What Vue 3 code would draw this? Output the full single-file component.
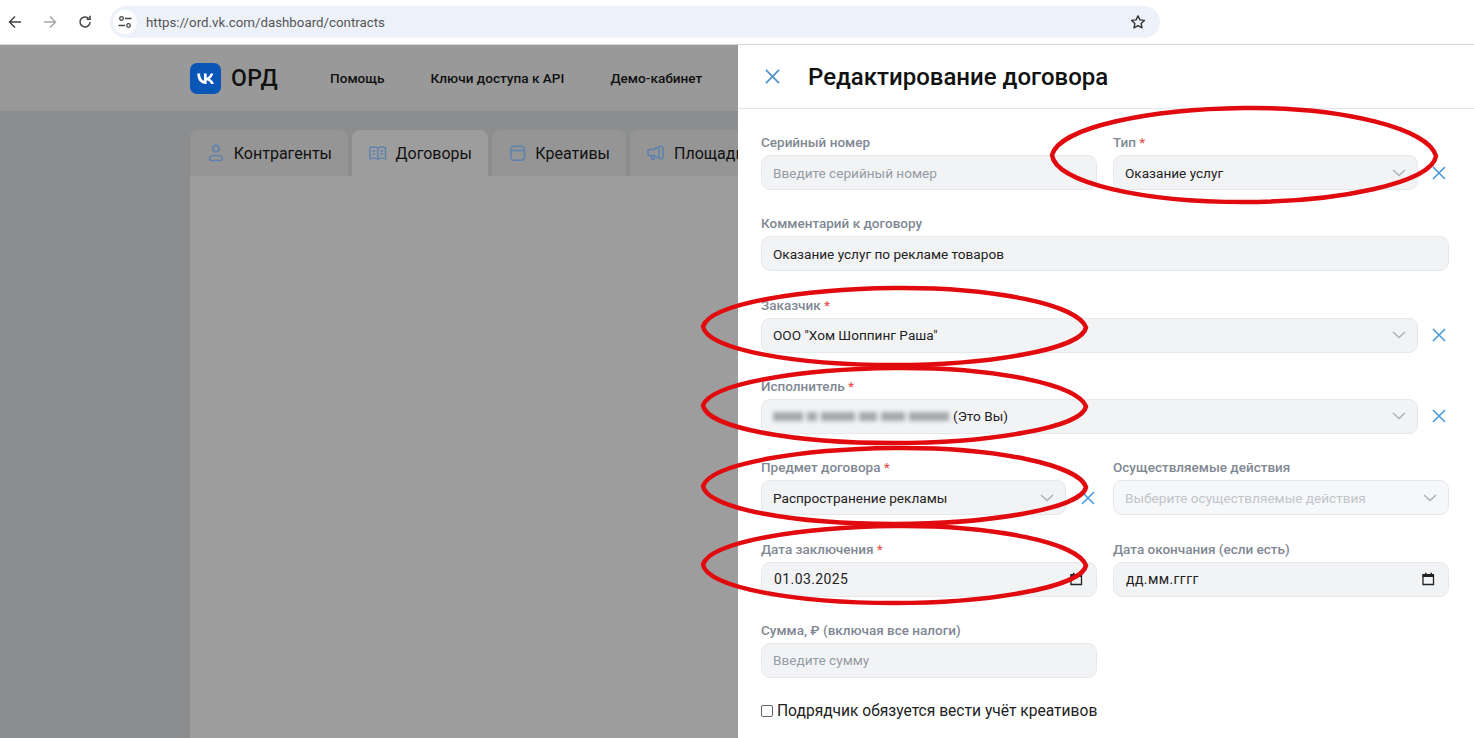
<template>
  <div class="screen">
    <!-- browser toolbar -->
    <div class="toolbar">
      <svg class="tool-btn" viewBox="0 0 16 16"><path d="M14 8H2.500M8 2.500 2.500 8 8 13.500" fill="none" stroke="#444" stroke-width="1.500"/></svg>
      <svg class="tool-btn" viewBox="0 0 16 16"><path d="M2 8h11.500M8 2.500 13.500 8 8 13.500" fill="none" stroke="#a8a8a8" stroke-width="1.500"/></svg>
      <svg class="tool-btn" viewBox="0 0 16 16"><path d="M13 8a5 5 0 1 1-1.500-3.600M13 1.800v3.400H9.600" fill="none" stroke="#444" stroke-width="1.500"/></svg>
      <div class="address">
        <span class="site-chip">
          <svg width="14" height="14" viewBox="0 0 14 14"><g fill="none" stroke="#444" stroke-width="1.300"><circle cx="3.500" cy="3.500" r="1.800"/><circle cx="10.500" cy="10.500" r="1.800"/><path d="M7 3.500h6.500M.5 10.500H7"/></g></svg>
        </span>
        <span class="url">https://ord.vk.com/dashboard/contracts</span>
        <svg class="star" viewBox="0 0 16 16"><path d="m8 1.800 1.900 4.100 4.500.5-3.300 3 .9 4.400L8 11.600l-4 2.200.9-4.400-3.300-3 4.500-.5z" fill="none" stroke="#333" stroke-width="1.400" stroke-linejoin="round"/></svg>
      </div>
    </div>

    <div class="page">
      <!-- dimmed site under the drawer -->
      <header class="site-header">
        <div class="logo">
          <svg width="25" height="25" viewBox="0 0 48 48"><path fill="#fff" d="M25.54 34.500c-10.940 0-17.180-7.500-17.440-19.980h5.480c.18 9.160 4.220 13.040 7.420 13.840V14.520h5.160v7.900c3.160-.34 6.480-3.940 7.600-7.900h5.160c-.86 4.880-4.460 8.480-7.020 9.960 2.560 1.200 6.660 4.340 8.220 10.020h-5.680c-1.220-3.800-4.260-6.740-8.280-7.140v7.140h-.62Z"/></svg>
        </div>
        <span class="brand">ОРД</span>
        <nav class="nav">
          <span v-for="item in nav" :key="item">{{ item }}</span>
        </nav>
      </header>
      <main class="site-main">
        <div class="tabs">
          <div class="tab tab-people">
            <svg viewBox="0 0 20 20"><g fill="none" stroke="#5f82ad" stroke-width="1.600"><circle cx="10" cy="5.500" r="3.200"/><path d="M3.500 15.500c0-2.200 2-3.300 6.500-3.300s6.500 1.100 6.500 3.300c0 1.500-1 2-2 2h-9c-1 0-2-.5-2-2z"/></g></svg>
            Контрагенты
          </div>
          <div class="tab tab-active">
            <svg viewBox="0 0 20 20"><g fill="none" stroke="#5f82ad" stroke-width="1.500"><path d="M2 4.500c3-1 6-1 8 .5 2-1.500 5-1.500 8-.5v11.500c-3-1-6-1-8 .5-2-1.500-5-1.500-8-.5zM10 5v11.500"/><path d="M4.500 8h3M4.500 11h3M12.500 8h3M12.500 11h3"/></g></svg>
            Договоры
          </div>
          <div class="tab tab-creative">
            <svg viewBox="0 0 20 20"><g fill="none" stroke="#5f82ad" stroke-width="1.600"><rect x="3" y="3" width="14" height="14.500" rx="3.500"/><path d="M3 7.500h14"/></g></svg>
            Креативы
          </div>
          <div class="tab tab-place">
            <svg viewBox="0 0 20 20"><g fill="none" stroke="#5f82ad" stroke-width="1.600" stroke-linejoin="round"><path d="M2 8c0-1 .6-1.500 1.500-1.500H8L14 3.500c1.500-.6 3-.3 3 2v8c0 2.300-1.500 2.600-3 2L8 12.500H3.500C2.600 12.500 2 12 2 11z"/><path d="M5 12.500l1 4h2.500l-.5-4M13 4v11"/></g></svg>
            Площадки
          </div>
        </div>
        <div class="tab-body"></div>
      </main>

      <!-- drawer -->
      <aside class="drawer">
        <div class="drawer-head">
          <svg class="close" viewBox="0 0 16 16"><path d="m1 1 14 14M15 1 1 15" stroke="#4a90d0" stroke-width="1.700" fill="none"/></svg>
          <h1>Редактирование договора</h1>
        </div>
        <div class="form">
          <div class="field">
            <label>Серийный номер</label>
            <div class="control muted">Введите серийный номер</div>
          </div>
          <div class="field">
            <label>Тип <i>*</i></label>
            <div class="with-clear">
              <div class="control select">Оказание услуг<svg class="chev" viewBox="0 0 14 8"><path d="m1 1 6 5.500L13 1" fill="none" stroke="#aab2bd" stroke-width="1.500"/></svg></div>
              <svg class="clear" viewBox="0 0 14 14"><path d="m1 1 12 12M13 1 1 13" stroke="#4a9bdc" stroke-width="1.600" fill="none"/></svg>
            </div>
          </div>

          <div class="field wide">
            <label>Комментарий к договору</label>
            <div class="control">Оказание услуг по рекламе товаров</div>
          </div>

          <div class="field wide">
            <label>Заказчик <i>*</i></label>
            <div class="with-clear">
              <div class="control select">ООО "Хом Шоппинг Раша"<svg class="chev" viewBox="0 0 14 8"><path d="m1 1 6 5.500L13 1" fill="none" stroke="#aab2bd" stroke-width="1.500"/></svg></div>
              <svg class="clear" viewBox="0 0 14 14"><path d="m1 1 12 12M13 1 1 13" stroke="#4a9bdc" stroke-width="1.600" fill="none"/></svg>
            </div>
          </div>

          <div class="field wide">
            <label>Исполнитель <i>*</i></label>
            <div class="with-clear">
              <div class="control select">
                <span class="smudge">
                  <b v-for="(w, n) in smudges" :key="n" :style="{ width: w + 'px' }"></b>
                </span>
                (Это Вы)
                <svg class="chev" viewBox="0 0 14 8"><path d="m1 1 6 5.500L13 1" fill="none" stroke="#aab2bd" stroke-width="1.500"/></svg>
              </div>
              <svg class="clear" viewBox="0 0 14 14"><path d="m1 1 12 12M13 1 1 13" stroke="#4a9bdc" stroke-width="1.600" fill="none"/></svg>
            </div>
          </div>

          <div class="field">
            <label>Предмет договора <i>*</i></label>
            <div class="with-clear">
              <div class="control select">Распространение рекламы<svg class="chev" viewBox="0 0 14 8"><path d="m1 1 6 5.500L13 1" fill="none" stroke="#aab2bd" stroke-width="1.500"/></svg></div>
              <svg class="clear clear-left" viewBox="0 0 14 14"><path d="m1 1 12 12M13 1 1 13" stroke="#4a9bdc" stroke-width="1.600" fill="none"/></svg>
            </div>
          </div>
          <div class="field">
            <label>Осуществляемые действия</label>
            <div class="control select disabled">Выберите осуществляемые действия<svg class="chev" viewBox="0 0 14 8"><path d="m1 1 6 5.500L13 1" fill="none" stroke="#aab2bd" stroke-width="1.500"/></svg></div>
          </div>

          <div class="field">
            <label>Дата заключения <i>*</i></label>
            <div class="control select date">01.03.2025<svg class="cal" viewBox="0 0 14 14"><path d="M2 3h10.500v9.500H2z" fill="none" stroke="#222" stroke-width="1.300"/><path d="M1.500 2h11.500v3H1.500zM4 .8h1.500v2H4zM9.500.8H11v2H9.500z" fill="#222"/></svg></div>
          </div>
          <div class="field">
            <label>Дата окончания (если есть)</label>
            <div class="control select date">дд.мм.гггг<svg class="cal" viewBox="0 0 14 14"><path d="M2 3h10.500v9.500H2z" fill="none" stroke="#222" stroke-width="1.300"/><path d="M1.500 2h11.500v3H1.500zM4 .8h1.500v2H4zM9.500.8H11v2H9.500z" fill="#222"/></svg></div>
          </div>

          <div class="field">
            <label>Сумма, ₽ (включая все налоги)</label>
            <div class="control muted">Введите сумму</div>
          </div>
        </div>
        <div class="check-row">
          <span class="check"></span>
          Подрядчик обязуется вести учёт креативов
        </div>
      </aside>
    </div>

    <!-- red marker scribbles on top of the screenshot -->
    <svg class="marks" viewBox="0 0 1474 738">
      <g fill="none" stroke="#e00a0f" stroke-width="4.500" stroke-linecap="round">
        <path v-for="(d, n) in marks" :key="n" :d="d" />
      </g>
    </svg>
  </div>
</template>

<script setup>
const nav = ['Помощь', 'Ключи доступа к API', 'Демо-кабинет']
const smudges = [30, 10, 34, 18, 24, 40]

// hand-drawn ovals: left, top, right, bottom
function oval(l, t, r, b) {
  const cx = (l + r) / 2
  const cy = (t + b) / 2
  const w = r - l
  const h = b - t
  return `M${l} ${cy}C${l + w * 0.02} ${cy - h * 0.3} ${l + w * 0.26} ${t + 1} ${cx} ${t}` +
    `C${r - w * 0.24} ${t - 1} ${r - w * 0.02} ${cy - h * 0.28} ${r} ${cy + 1}` +
    `C${r - w * 0.01} ${cy + h * 0.3} ${r - w * 0.26} ${b} ${cx} ${b}` +
    `C${l + w * 0.24} ${b} ${l + w * 0.01} ${cy + h * 0.3} ${l} ${cy}Z`
}

const marks = [
  oval(1052, 108, 1436, 202),
  oval(703, 288, 1086, 365),
  oval(703, 368, 1086, 443),
  oval(703, 448, 1086, 524),
  oval(703, 526, 1086, 603)
]
</script>

<style>
body {
  margin: 0;
  overflow: hidden;
}
</style>

<style scoped>
.screen {
  position: relative;
  width: 1474px;
  height: 738px;
  overflow: hidden;
  font-family: Roboto, "Noto Sans", sans-serif;
  color: #111;
}

.toolbar {
  height: 44px;
  box-sizing: border-box;
  padding: 6px 0 0 7px;
  display: flex;
  align-items: flex-start;
  background: #fff;
}

.tool-btn {
  width: 16px;
  height: 16px;
  margin: 8px 19px 0 0;
}

.address {
  width: 1050px;
  height: 32px;
  margin-left: -2px;
  border-radius: 16px;
  background: #edf2fa;
  display: flex;
  align-items: center;
  padding-left: 3px;
  box-sizing: border-box;
}

.site-chip {
  width: 24px;
  height: 24px;
  border-radius: 50%;
  background: #fff;
  display: flex;
  align-items: center;
  justify-content: center;
}

.url {
  margin-left: 9px;
  font-size: 13.300px;
  color: #555;
}

.star {
  width: 16px;
  height: 16px;
  margin-left: auto;
  margin-right: 14px;
}

.page {
  position: relative;
  height: 694px;
  border-top: 1px solid #d8d8d8;
  box-sizing: border-box;
  background: #8c8d8e;
  display: flex;
  flex-direction: column;
}

.site-header {
  height: 66px;
  flex: none;
  background: #999;
  padding-left: 190px;
  display: flex;
  align-items: center;
}

.logo {
  width: 31px;
  height: 31px;
  border-radius: 7px;
  background: #0a56b6;
  display: flex;
  align-items: center;
  justify-content: center;
}

.brand {
  margin-left: 10px;
  font-size: 23px;
  font-weight: 500;
  letter-spacing: 0.3px;
}

.nav {
  margin-left: 52px;
  display: flex;
  gap: 46px;
  font-size: 13.600px;
  font-weight: 500;
}

.site-main {
  flex: 1;
  padding: 19px 0 0 190px;
  display: flex;
  flex-direction: column;
}

.tabs {
  display: flex;
  gap: 4px;
  height: 46px;
  flex: none;
}

.tab {
  display: flex;
  align-items: center;
  gap: 8px;
  padding: 0 16px;
  box-sizing: border-box;
  border-radius: 8px 8px 0 0;
  background: #959595;
  font-size: 16px;
  white-space: nowrap;
}

.tab svg {
  width: 20px;
  height: 20px;
}

.tab-people { width: 158px; }
.tab-active { width: 136px; background: #9d9d9d; }
.tab-creative { width: 134px; }

.tab-body {
  flex: 1;
  background: #9d9d9d;
}

.drawer {
  position: absolute;
  left: 738px;
  top: 0;
  right: 0;
  bottom: 0;
  background: #fff;
}

.drawer-head {
  height: 64px;
  box-sizing: border-box;
  border-bottom: 1px solid #e4e6e9;
  padding-left: 27px;
  display: flex;
  align-items: center;
}

.close {
  width: 15px;
  height: 15px;
}

h1 {
  margin: 0 0 0 28px;
  font-size: 24px;
  font-weight: 500;
  color: #111;
}

.form {
  width: 688px;
  margin: 24px 0 0 23px;
  display: grid;
  grid-template-columns: 336px 336px;
  column-gap: 16px;
  row-gap: 24.330px;
}

.wide {
  grid-column: span 2;
}

label {
  display: block;
  height: 16px;
  line-height: 16px;
  padding-top: 1px;
  margin-bottom: 5px;
  font-size: 13.500px;
  font-weight: 500;
  color: #7f8893;
}

label i {
  font-style: normal;
  color: #e2554f;
}

.with-clear {
  display: flex;
  align-items: center;
}

.control {
  flex: 1;
  height: 35px;
  min-width: 0;
  box-sizing: border-box;
  padding: 0 11px;
  border: 1px solid #e6e8eb;
  border-radius: 9px;
  background: #f2f3f5;
  display: flex;
  align-items: center;
  font-size: 13.600px;
  color: #222;
  white-space: nowrap;
}

.muted {
  color: #949ca6;
}

.disabled {
  background: #f6f7f8;
  color: #bfc5cc;
}

.date {
  padding: 0 13px 0 12px;
  font-size: 14px;
  letter-spacing: 0.4px;
}

.chev {
  width: 14px;
  height: 8px;
  margin-left: auto;
}

.cal {
  width: 14px;
  height: 14px;
  margin-left: auto;
}

.clear {
  width: 14px;
  height: 14px;
  flex: none;
  margin: 0 3px 0 14px;
}

.clear-left {
  margin: 0 2px 0 15px;
}

.smudge {
  display: inline-flex;
  gap: 4px;
  margin-right: 4px;
  filter: blur(2.200px);
}

.smudge b {
  display: block;
  height: 9px;
  background: #7b7f85;
  opacity: 0.65;
}

.check-row {
  margin: 24px 0 0 23px;
  display: flex;
  align-items: center;
  gap: 4px;
  font-size: 15.600px;
  color: #222;
}

.check {
  width: 10px;
  height: 10px;
  border: 1px solid #666;
  border-radius: 2px;
  background: #fff;
}

.marks {
  position: absolute;
  inset: 0;
  width: 1474px;
  height: 738px;
  pointer-events: none;
}
</style>
